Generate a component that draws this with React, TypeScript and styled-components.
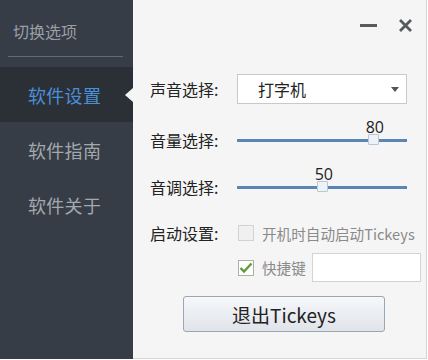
import * as React from 'react'
import styled, { createGlobalStyle } from 'styled-components'

const CJK = `"Noto Sans CJK SC", "Noto Sans", sans-serif`

const GlobalStyle = createGlobalStyle`
  html, body {
    margin: 0;
    padding: 0;
    background: #ffffff;
  }
  body {
    font-family: ${CJK};
  }
`

const Window = styled.div`
  display: flex;
  width: 427px;
  height: 359px;
  box-sizing: border-box;
`

const Sidebar = styled.nav`
  width: 133px;
  flex-shrink: 0;
  background: #373d46;
  display: flex;
  flex-direction: column;
  padding-top: 19px;
  box-sizing: border-box;
`

const SideTitle = styled.div`
  height: 24px;
  line-height: 24px;
  padding-left: 13px;
  font-size: 16px;
  color: #9a9fa6;
`

const Divider = styled.div`
  height: 1px;
  margin: 13px 10px 10px 8px;
  background: #646a72;
`

const MenuItem = styled.div<{ $active?: boolean }>`
  position: relative;
  height: 55px;
  display: flex;
  align-items: center;
  padding-left: 28px;
  font-size: 18px;
  letter-spacing: 0.3px;
  color: ${(p) => (p.$active ? '#4b8fd6' : '#a3a8ae')};
  background: ${(p) => (p.$active ? '#2b3037' : 'transparent')};
`

// little pointer that sticks into the content panel
const Pointer = styled.span`
  position: absolute;
  right: 0;
  top: 50%;
  margin-top: -7px;
  border-top: 7px solid transparent;
  border-bottom: 7px solid transparent;
  border-right: 8px solid #f5f5f5;
`

const Panel = styled.main`
  flex: 1;
  background: #f5f5f5;
  border-right: 1px solid #d4d4d4;
  border-bottom: 1px solid #d4d4d4;
  display: flex;
  flex-direction: column;
  padding-left: 17px;
  box-sizing: border-box;
`

const TitleBar = styled.div`
  height: 50px;
  display: flex;
  justify-content: flex-end;
  align-items: center;
  gap: 21px;
  padding-right: 13px;
`

const Minus = styled.span`
  width: 17px;
  height: 3px;
  background: #555a5f;
`

const Row = styled.div<{ $top: number; $h?: number }>`
  display: flex;
  align-items: center;
  margin-top: ${(p) => p.$top}px;
  height: ${(p) => p.$h ?? 30}px;
`

const Label = styled.div`
  width: 87px;
  flex-shrink: 0;
  font-size: 16px;
  color: #222;
`

const Select = styled.div`
  width: 170px;
  height: 30px;
  box-sizing: border-box;
  border: 1px solid #c9c9c9;
  background: #fff;
  display: flex;
  align-items: center;
  justify-content: space-between;
  padding: 0 7px 0 20px;
  font-size: 16px;
  color: #222;
`

const Caret = styled.span`
  border-left: 4px solid transparent;
  border-right: 4px solid transparent;
  border-top: 5px solid #555;
`

const Track = styled.div`
  position: relative;
  width: 170px;
  height: 3px;
  background: #5a86b6;
`

const Thumb = styled.span`
  position: absolute;
  top: 50%;
  width: 11px;
  height: 11px;
  margin: -6px 0 0 -5px;
  box-sizing: border-box;
  background: #eef2f7;
  border: 1px solid #b9c8d8;
  border-radius: 1px;
`

const SliderValue = styled.span`
  position: absolute;
  bottom: 7px;
  transform: translateX(-40%);
  font-family: "Open Sans", "Noto Sans", sans-serif;
  font-size: 16px;
  line-height: 16px;
  color: #222;
`

const CheckRow = styled.label`
  display: flex;
  align-items: center;
  gap: 8px;
  margin-left: 1px;
`

const Box = styled.span<{ $checked?: boolean }>`
  width: 16px;
  height: 16px;
  box-sizing: border-box;
  border: 1px solid ${(p) => (p.$checked ? '#a9b3a4' : '#d2d2d2')};
  background: ${(p) => (p.$checked ? '#fff' : '#f0f0f0')};
  display: flex;
  align-items: center;
  justify-content: center;
`

const CheckText = styled.span`
  font-size: 14.6px;
  color: #8a8a8a;
`

const KeyInput = styled.div`
  width: 109px;
  height: 29px;
  margin-left: 6px;
  box-sizing: border-box;
  border: 1px solid #d3d3d3;
  background: #fff;
`

const QuitButton = styled.button`
  margin: 14px 0 0 33px;
  width: 202px;
  height: 36px;
  border: 1px solid #9aa6b2;
  border-radius: 3px;
  background: linear-gradient(#f7f8fa, #dfe4ea);
  font-family: ${CJK};
  font-size: 19px;
  color: #222;
  padding: 0;
`

const Slider: React.FC<{ value: number }> = ({ value }) => (
  <Track>
    <SliderValue style={{ left: `${value}%` }}>{value}</SliderValue>
    <Thumb style={{ left: `${value}%` }} />
  </Track>
)

const menu = ['软件设置', '软件指南', '软件关于']

export default function App() {
  return (
    <>
      <GlobalStyle />
      <Window>
        <Sidebar>
          <SideTitle>切换选项</SideTitle>
          <Divider />
          {menu.map((m, i) => (
            <MenuItem key={m} $active={i === 0}>
              {m}
              {i === 0 && <Pointer />}
            </MenuItem>
          ))}
        </Sidebar>
        <Panel>
          <TitleBar>
            <Minus />
            <svg width="15" height="15" viewBox="0 0 15 15">
              <path d="M2 2 L13 13 M13 2 L2 13" stroke="#555a5f" strokeWidth="2.8" />
            </svg>
          </TitleBar>
          <Row $top={24}>
            <Label>声音选择:</Label>
            <Select>
              打字机
              <Caret />
            </Select>
          </Row>
          <Row $top={21}>
            <Label>音量选择:</Label>
            <Slider value={80} />
          </Row>
          <Row $top={17}>
            <Label>音调选择:</Label>
            <Slider value={50} />
          </Row>
          <Row $top={16}>
            <Label>启动设置:</Label>
            <CheckRow>
              <Box />
              <CheckText>开机时自动启动Tickeys</CheckText>
            </CheckRow>
          </Row>
          <Row $top={5} $h={29}>
            <Label />
            <CheckRow>
              <Box $checked>
                <svg width="14" height="12" viewBox="0 0 14 12">
                  <path d="M1.5 6 L5 9.5 L12.5 1.5" fill="none" stroke="#5f9a3c" strokeWidth="2.4" />
                </svg>
              </Box>
              <CheckText>快捷键</CheckText>
            </CheckRow>
            <KeyInput />
          </Row>
          <QuitButton>退出Tickeys</QuitButton>
        </Panel>
      </Window>
    </>
  )
}
